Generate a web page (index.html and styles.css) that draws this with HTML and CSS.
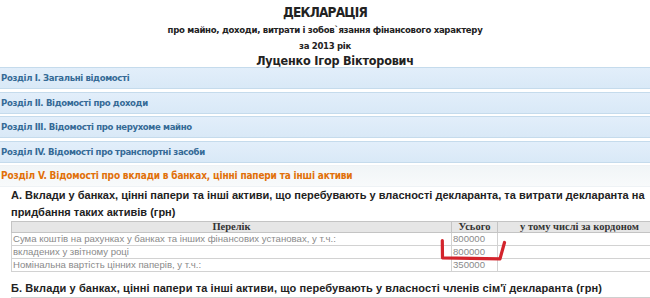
FILE: index.html
```html
<!DOCTYPE html>
<html lang="uk">
<head>
<meta charset="utf-8">
<title>Декларація</title>
<link rel="stylesheet" href="styles.css">
</head>
<body>
<div class="page">
  <header class="doc-head">
    <h1 class="title">ДЕКЛАРАЦІЯ</h1>
    <p class="subtitle">про майно, доходи, витрати і зобов`язання фінансового характеру</p>
    <p class="subtitle">за 2013 рік</p>
    <h2 class="person">Луценко Ігор Вікторович</h2>
  </header>

  <div class="accordion">
    <div class="acc-head">Розділ І. Загальні відомості</div>
    <div class="acc-head">Розділ ІІ. Відомості про доходи</div>
    <div class="acc-head">Розділ ІІІ. Відомості про нерухоме майно</div>
    <div class="acc-head">Розділ ІV. Відомості про транспортні засоби</div>
    <div class="acc-head active">Розділ V. Відомості про вклади в банках, цінні папери та інші активи</div>
    <div class="acc-content">
      <h3 class="sec-title">А. Вклади у банках, цінні папери та інші активи, що перебувають у власності декларанта, та витрати декларанта на<br>придбання таких активів (грн)</h3>
      <div class="table-wrap">
        <table class="assets">
          <thead>
            <tr><th class="c-name">Перелік</th><th class="c-sum">Усього</th><th class="c-abroad">у тому числі за кордоном</th></tr>
          </thead>
          <tbody>
            <tr><td>Сума коштів на рахунках у банках та інших фінансових установах, у т.ч.:</td><td>800000</td><td></td></tr>
            <tr><td>вкладених у звітному році</td><td>800000</td><td></td></tr>
            <tr><td>Номінальна вартість цінних паперів, у т.ч.:</td><td>350000</td><td></td></tr>
          </tbody>
        </table>
        <svg class="mark" width="75" height="28" viewBox="0 0 75 28" aria-hidden="true">
          <path d="M6.3 3.5 L6.5 20.8 L64 21.8 L68.5 5.5" fill="none" stroke="#d3242c" stroke-width="3.2" stroke-linecap="round" stroke-linejoin="round"/>
        </svg>
      </div>
      <h3 class="sec-title b">Б. Вклади у банках, цінні папери та інші активи, що перебувають у власності членів сім'ї декларанта (грн)</h3>
      <div class="b-line"></div>
    </div>
  </div>
</div>
</body>
</html>
```

FILE: styles.css
```css
html, body {
  margin: 0;
  padding: 0;
  overflow: hidden;
  background: #fff;
}
.page {
  width: 650px;
  font-family: "Liberation Sans Narrow", "DejaVu Sans Condensed", "Liberation Sans", Arial, sans-serif;
  color: #222;
}
.doc-head {
  text-align: center;
  padding-top: 4px;
}
.title {
  margin: 0;
  font-size: 13.5px;
  line-height: 16px;
  letter-spacing: -0.8px;
  font-weight: bold;
}
.subtitle {
  margin: 0;
  font-size: 9.5px;
  line-height: 15.5px;
  letter-spacing: -0.3px;
  font-weight: bold;
}
.subtitle:first-of-type {
  margin-top: 2px;
}
.person {
  margin: 2px 0 0;
  padding-left: 20px;
  font-size: 12.5px;
  line-height: 12px;
  letter-spacing: -0.2px;
  font-weight: bold;
}
.accordion {
  margin: 0 -6px;
}
.acc-head {
  height: 20px;
  line-height: 20px;
  border: 1px solid #c5dbec;
  border-radius: 3px;
  background: linear-gradient(#e2eefa, #d9e9f7);
  color: #356a96;
  font-weight: bold;
  font-size: 9.5px;
  letter-spacing: -0.35px;
  padding-left: 6px;
  margin-top: 2.5px;
}
.acc-head:first-child {
  margin-top: 0;
}
.acc-head.active {
  background: linear-gradient(#f1f5f7, #f8fafb);
  border-color: #eef2f5;
  color: #e17009;
  font-size: 10px;
  letter-spacing: -0.17px;
  border-radius: 3px 3px 0 0;
}
.acc-content {
  padding: 0 0 0 17px;
}
.sec-title {
  margin: 0;
  font-family: "Liberation Sans", Arial, sans-serif;
  font-size: 11px;
  line-height: 17px;
  font-weight: bold;
  color: #222;
  white-space: nowrap;
}
.sec-title.b {
  margin-top: 8px;
  letter-spacing: 0.1px;
}
.table-wrap {
  position: relative;
}
.assets {
  border-collapse: collapse;
  width: 651px;
  font-family: "Liberation Sans", Arial, sans-serif;
  font-size: 9.6px;
  color: #8a8a8a;
}
.assets th {
  background: #e6e6e6;
  color: #333;
  font-family: "Liberation Serif", "Times New Roman", serif;
  font-weight: bold;
  font-size: 10.5px;
  line-height: 10px;
  height: 10px;
  border: 1px solid #c4c4c4;
  padding: 0;
  text-align: center;
}
.assets td {
  height: 12px;
  line-height: 12px;
  border: 1px solid #d2d2d2;
  padding: 0 1px;
  white-space: nowrap;
}
.c-name { width: 439px; }
.c-sum { width: 45px; }
.mark {
  position: absolute;
  left: 425px;
  top: 16px;
}
.b-line {
  height: 1px;
  background: #cfcfcf;
}
```
